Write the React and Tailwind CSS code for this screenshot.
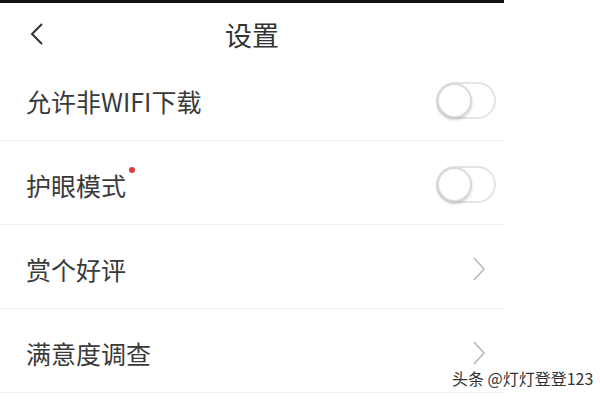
import React from "react";

function Toggle() {
  return (
    <div className="relative w-[60px] h-[37px] rounded-full border-2 border-[#e4e4e4] bg-white">
      <div className="absolute left-[-1px] top-[-1px] w-[35px] h-[35px] rounded-full bg-white border-2 border-[#dadada] shadow-[0_2px_3px_rgba(0,0,0,0.18)]" />
    </div>
  );
}

function Chevron() {
  return (
    <svg width="14" height="26" viewBox="0 0 14 26" className="mr-[10px]">
      <path d="M2 2 L12 13 L2 24" fill="none" stroke="#b8b8b8" strokeWidth="1.6" />
    </svg>
  );
}

function Row({ label, right, dot }) {
  return (
    <div className="flex items-center justify-between h-[84px] border-b border-[#f1f1f1] pl-[26px] pr-[8px] pt-[4px]">
      <div className="relative text-[25px] text-[#3a3a3a] leading-none pt-[2px]">
        {label}
        {dot && (
          <span className="absolute right-[-9px] top-[-4px] w-[6px] h-[6px] rounded-full bg-[#e0393e]" />
        )}
      </div>
      {right}
    </div>
  );
}

export default function App() {
  return (
    <div
      className="relative w-[600px] h-[400px] bg-white overflow-hidden"
      style={{ fontFamily: '"Noto Sans CJK SC", "Noto Sans", sans-serif' }}
    >
      <div className="w-[504px]">
        <div className="h-[3px] bg-[#111]" />
        <div className="flex items-center h-[54px] pt-[8px] pl-[29px] pr-[45px]">
          <svg width="16" height="24" viewBox="0 0 16 24">
            <path d="M13 2 L3 12 L13 22" fill="none" stroke="#333" strokeWidth="2" />
          </svg>
          <span className="flex-1 text-center text-[27px] text-[#333] leading-none">设置</span>
        </div>
        <Row label="允许非WIFI下载" right={<Toggle />} />
        <Row label="护眼模式" dot right={<Toggle />} />
        <Row label="赏个好评" right={<Chevron />} />
        <Row label="满意度调查" right={<Chevron />} />
      </div>
      <div
        className="absolute left-[452px] top-[370px] whitespace-nowrap text-[16px] text-[#333] leading-none"
        style={{ textShadow: "0 0 2px #fff, 0 0 2px #fff" }}
      >
        头条 @灯灯登登123
      </div>
    </div>
  );
}
